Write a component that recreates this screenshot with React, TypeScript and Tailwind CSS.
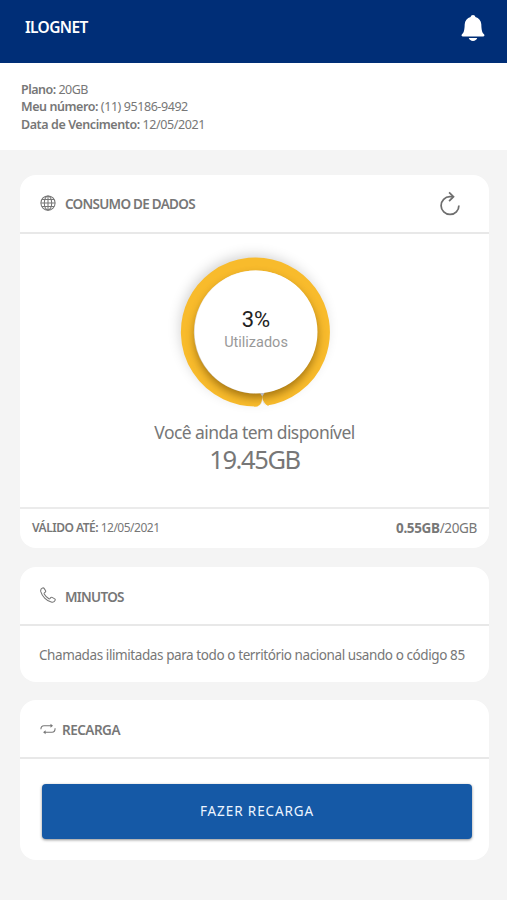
import type { ReactNode } from "react";

function GlobeIcon() {
  return (
    <svg width="16" height="16" viewBox="0 0 16 16" fill="none" stroke="#777" strokeWidth="1.05">
      <circle cx="8" cy="8" r="7.1" />
      <ellipse cx="8" cy="8" rx="3.7" ry="7.1" />
      <path d="M8 .9v14.2M.9 8h14.2M1.9 4.5h12.2M1.9 11.5h12.2" />
    </svg>
  );
}

function PhoneIcon() {
  return (
    <svg width="16" height="16" viewBox="0 0 16 16" fill="none" stroke="#777" strokeWidth="1.05" strokeLinejoin="round">
      <path d="M2.500 1C1 1.600.4 3 .8 4.700 2 9.200 6.500 13.900 11.200 15.100c1.900.5 3.500-.4 4-1.900.2-.6 0-1-.5-1.300l-2.600-1.500c-.6-.3-1-.2-1.400.3l-.8 1c-.3.3-.6.4-1 .1C7 10.600 5.300 8.800 4.200 6.900c-.2-.4-.1-.7.200-1l.9-.8c.5-.4.5-.8.300-1.300L4.100 1.400C3.700.8 3.200.7 2.500 1z" />
    </svg>
  );
}

function RepeatIcon() {
  return (
    <svg width="16" height="12" viewBox="0 0 16 12" fill="none" stroke="#777" strokeWidth="1.1">
      <path d="M.9 6.300C.9 3.600 2 2.800 4 2.800h7.500M15.100 5.200c0 2.900-1.100 4-3.100 4H4.800" />
      <path d="M10.500.8 13 2.800l-2.500 2zM5.600 7.200 3.100 9.200l2.500 2z" fill="#777" stroke="none" />
    </svg>
  );
}

function ReloadIcon() {
  return (
    <svg width="22" height="26" viewBox="0 0 22 26" fill="none" stroke="#6e6e6e" strokeWidth="1.75">
      <path d="M14 5.700h-3.100a8.900 8.900 0 1 0 9 8.800" />
      <path d="M10.100 1.300 14.500 5.700l-4.400 4.400" />
    </svg>
  );
}

function BellIcon() {
  return (
    <svg width="24" height="28" viewBox="0 0 24 28" fill="#fff">
      <path d="M12 1c1.300 0 2.200.9 2.400 2 3.500 1 5.700 3.700 5.900 7.300.2 5.300.6 8.300 2.700 10 .9.900.4 2.300-.9 2.300H1.900c-1.300 0-1.800-1.400-.9-2.300 2.100-1.700 2.500-4.700 2.700-10C3.900 6.700 6.100 4 9.600 3c.2-1.100 1.100-2 2.400-2z" />
      <path d="M7.800 24.100h8.400c-.5 1.700-2.100 2.900-4.200 2.900s-3.700-1.200-4.200-2.900z" />
    </svg>
  );
}

function UsageRing() {
  return (
    <svg width="210" height="190" viewBox="0 0 210 190">
      <defs>
        <filter id="outer" x="-30%" y="-30%" width="160%" height="160%">
          <feGaussianBlur stdDeviation="7" />
        </filter>
        <filter id="inner" x="-30%" y="-30%" width="160%" height="160%">
          <feGaussianBlur stdDeviation="4.500" />
        </filter>
        <clipPath id="disc">
          <circle cx="105" cy="95" r="74.500" />
        </clipPath>
      </defs>
      <circle cx="102" cy="91" r="72" fill="#000" opacity="0.2" filter="url(#outer)" />
      <circle cx="105" cy="95" r="70" fill="#fff" />
      <path d="M106.500 163A68 68 0 1 1 115 162.200" fill="none" stroke="#f8bb2c" strokeWidth="13" />
      <path d="M103 155.500h7.500q1.500 6-.5 10.500-1.500 3.500-7 3.500z" fill="#f8bb2c" />
      <path d="M118 154.500h-6.500q-1 7.500 1.500 10.500 2 3.500 5 3.500z" fill="#f8bb2c" />
      <g clipPath="url(#disc)">
        <circle cx="105" cy="99.500" r="61.500" fill="#704800" opacity="0.6" filter="url(#inner)" />
      </g>
      <path d="M107 170.500q3.700-2.500 4.200-6.500 1 3.800 4 5.500v3h-8.200z" fill="#fbfbfb" />
      <circle cx="105" cy="95" r="61.500" fill="#fff" />
      <path d="m109 156 2.200 3.500 2.300-3.500z" fill="#b8bac4" />
    </svg>
  );
}

function Card({ icon, title, action, className, children }: { icon: ReactNode; title: ReactNode; action?: ReactNode; className: string; children: ReactNode }) {
  return (
    <section className={`flex flex-col rounded-[16px] bg-white ${className}`}>
      <header className="flex h-[59px] shrink-0 items-center border-b-2 border-[#e8e8e8] pr-[28px] pl-5">
        {icon}
        {title}
        {action}
      </header>
      {children}
    </section>
  );
}

export default function App() {
  return (
    <div className="h-[900px] w-[507px] overflow-hidden bg-[#f4f4f4] font-['Noto_Sans','Open_Sans',sans-serif] whitespace-nowrap text-[#777]">
      <header className="flex h-[62.500px] items-start justify-between bg-[#002e77] pt-[14px] pr-[22px] pl-[25px]">
        <h1 className="text-[15.500px] leading-[26px] font-semibold tracking-[-0.65px] text-white">ILOGNET</h1>
        <BellIcon />
      </header>
      <div className="h-[87px] bg-white pt-[18px] pl-[21px] text-[12.500px] leading-[17.500px]">
        <p className="tracking-[-0.5px]"><b className="font-semibold">Plano:</b> 20GB</p>
        <p className="tracking-[-0.43px]"><b className="font-semibold">Meu número:</b> (11) 95186-9492</p>
        <p className="tracking-[-0.42px]"><b className="font-semibold">Data de Vencimento:</b> 12/05/2021</p>
      </div>
      <main className="flex flex-col pt-[25.500px] pr-[18px] pl-5">
        <Card
          className="h-[373px]"
          icon={<div className="-mt-[2px]"><GlobeIcon /></div>}
          title={<h2 className="mt-[2px] ml-[9px] text-[13.500px] font-semibold tracking-[-0.72px]">CONSUMO DE DADOS</h2>}
          action={<div className="ml-auto"><ReloadIcon /></div>}
        >
          <div className="flex h-[275px] shrink-0 flex-col items-center border-b-2 border-[#ebebeb] pt-[3px]">
            <div className="ml-[3px] grid place-items-center">
              <div className="col-start-1 row-start-1"><UsageRing /></div>
              <div className="z-10 col-start-1 row-start-1 flex flex-col items-center pb-[3px] font-[Roboto,sans-serif]">
                <span className="text-[22px] leading-[24px] text-[#222]">3%</span>
                <span className="text-[14.500px] leading-[22px] text-[#999]">Utilizados</span>
              </div>
            </div>
            <p className="-mt-[7px] text-[17.500px] leading-[24px] tracking-[-0.57px]">Você ainda tem disponível</p>
            <p className="text-[25.500px] leading-[31px] tracking-[-1.400px]">19.45GB</p>
          </div>
          <div className="flex h-[38px] items-center justify-between pr-3 pl-3">
            <p className="text-[12px] tracking-[-0.5px]"><b className="font-semibold">VÁLIDO ATÉ:</b> 12/05/2021</p>
            <p className="text-[13.500px] tracking-[-0.35px]"><b className="font-bold">0.55GB</b>/20GB</p>
          </div>
        </Card>
        <Card
          className="mt-[19px] h-[115px]"
          icon={<div className="-mt-[2px]"><PhoneIcon /></div>}
          title={<h2 className="mt-[3px] ml-[9px] text-[13.500px] font-semibold tracking-[-0.72px]">MINUTOS</h2>}
        >
          <p className="pt-[19px] pl-[19px] text-[13.500px] leading-[20px] tracking-[-0.41px]">Chamadas ilimitadas para todo o território nacional usando o código 85</p>
        </Card>
        <Card
          className="mt-[18px] h-[160px]"
          icon={<RepeatIcon />}
          title={<h2 className="mt-[3px] ml-[6px] text-[13.500px] font-semibold tracking-[-0.5px]">RECARGA</h2>}
        >
          <button className="mt-[25px] mr-[17px] ml-[22px] h-[55px] rounded-[4px] bg-[#1559a6] text-[13.500px] tracking-[0.9px] text-[#edf5ff] shadow-[0_1px_3px_rgba(0,0,0,0.45)]">FAZER RECARGA</button>
        </Card>
      </main>
    </div>
  );
}
